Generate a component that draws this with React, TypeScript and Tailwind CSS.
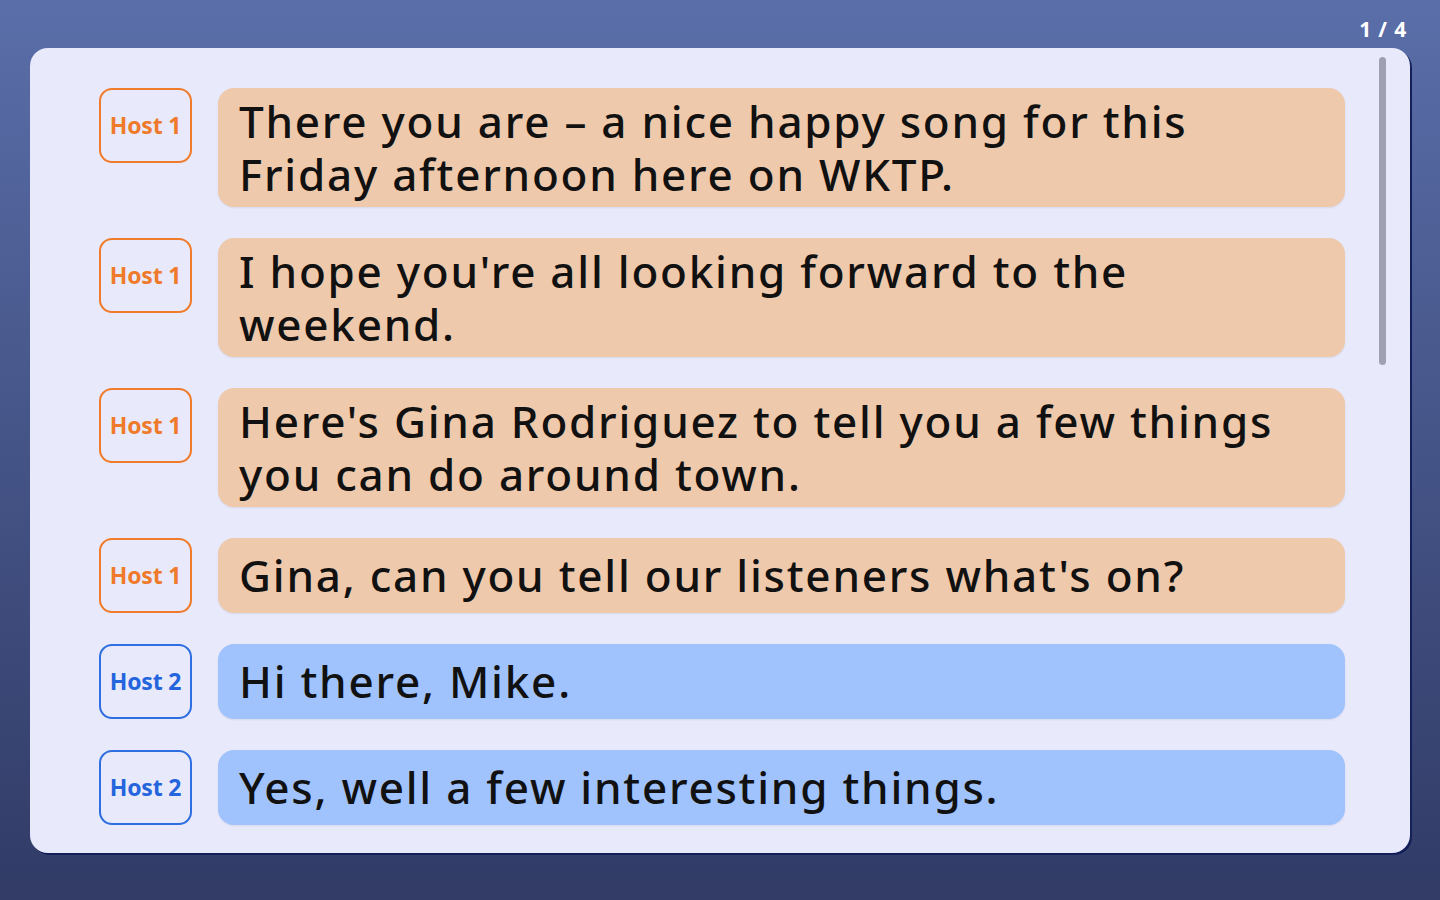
const LINES: { host: 1 | 2; text: string }[] = [
  { host: 1, text: "There you are – a nice happy song for this Friday afternoon here on WKTP." },
  { host: 1, text: "I hope you're all looking forward to the weekend." },
  { host: 1, text: "Here's Gina Rodriguez to tell you a few things you can do around town." },
  { host: 1, text: "Gina, can you tell our listeners what's on?" },
  { host: 2, text: "Hi there, Mike." },
  { host: 2, text: "Yes, well a few interesting things." },
];

export default function App() {
  return (
    <main
      className="relative flex h-[900px] w-[1440px] flex-col overflow-hidden bg-gradient-to-b from-[#5a6ea9] to-[#313b66] px-[30px] pb-[47px] pt-[48px]"
      style={{ fontFamily: '"Noto Sans", "Open Sans", sans-serif' }}
    >
      <div className="absolute right-[33px] top-[14px] text-[21px] font-bold tracking-[0.04em] text-white">1 / 4</div>

      <section className="relative flex-1 overflow-hidden rounded-[18px] bg-[#e8eafc] shadow-[2px_2px_0_#14205a]">
        <div className="flex flex-col gap-[31px] pl-[69px] pr-[65px] pt-[40px]">
          {LINES.map((line, i) => {
            const isOne = line.host === 1;
            return (
              <div key={i} className="flex items-start gap-[26px]">
                <div
                  className={`flex h-[75px] w-[93px] shrink-0 items-center justify-center rounded-[13px] border-2 text-[23px] font-bold tracking-[-0.01em] ${
                    isOne ? "border-[#f07b2a] text-[#ef7a2b]" : "border-[#2e6ee0] text-[#2464dc]"
                  }`}
                >
                  Host {line.host}
                </div>
                <div
                  className={`flex min-h-[75px] flex-1 items-center rounded-[16px] py-[6.5px] pl-[21px] pr-[20px] text-[44px] font-medium leading-[53px] tracking-[0.04em] text-[#111111] shadow-[0_1px_2px_rgba(0,0,0,0.08)] ${
                    isOne ? "bg-[#efc9ac]" : "bg-[#a0c3fe]"
                  }`}
                >
                  <span>{line.text}</span>
                </div>
              </div>
            );
          })}
        </div>

        <div className="absolute right-[24px] top-[9px] h-[308px] w-[7px] rounded-full bg-[#9fa1b3]" />
      </section>
    </main>
  );
}
